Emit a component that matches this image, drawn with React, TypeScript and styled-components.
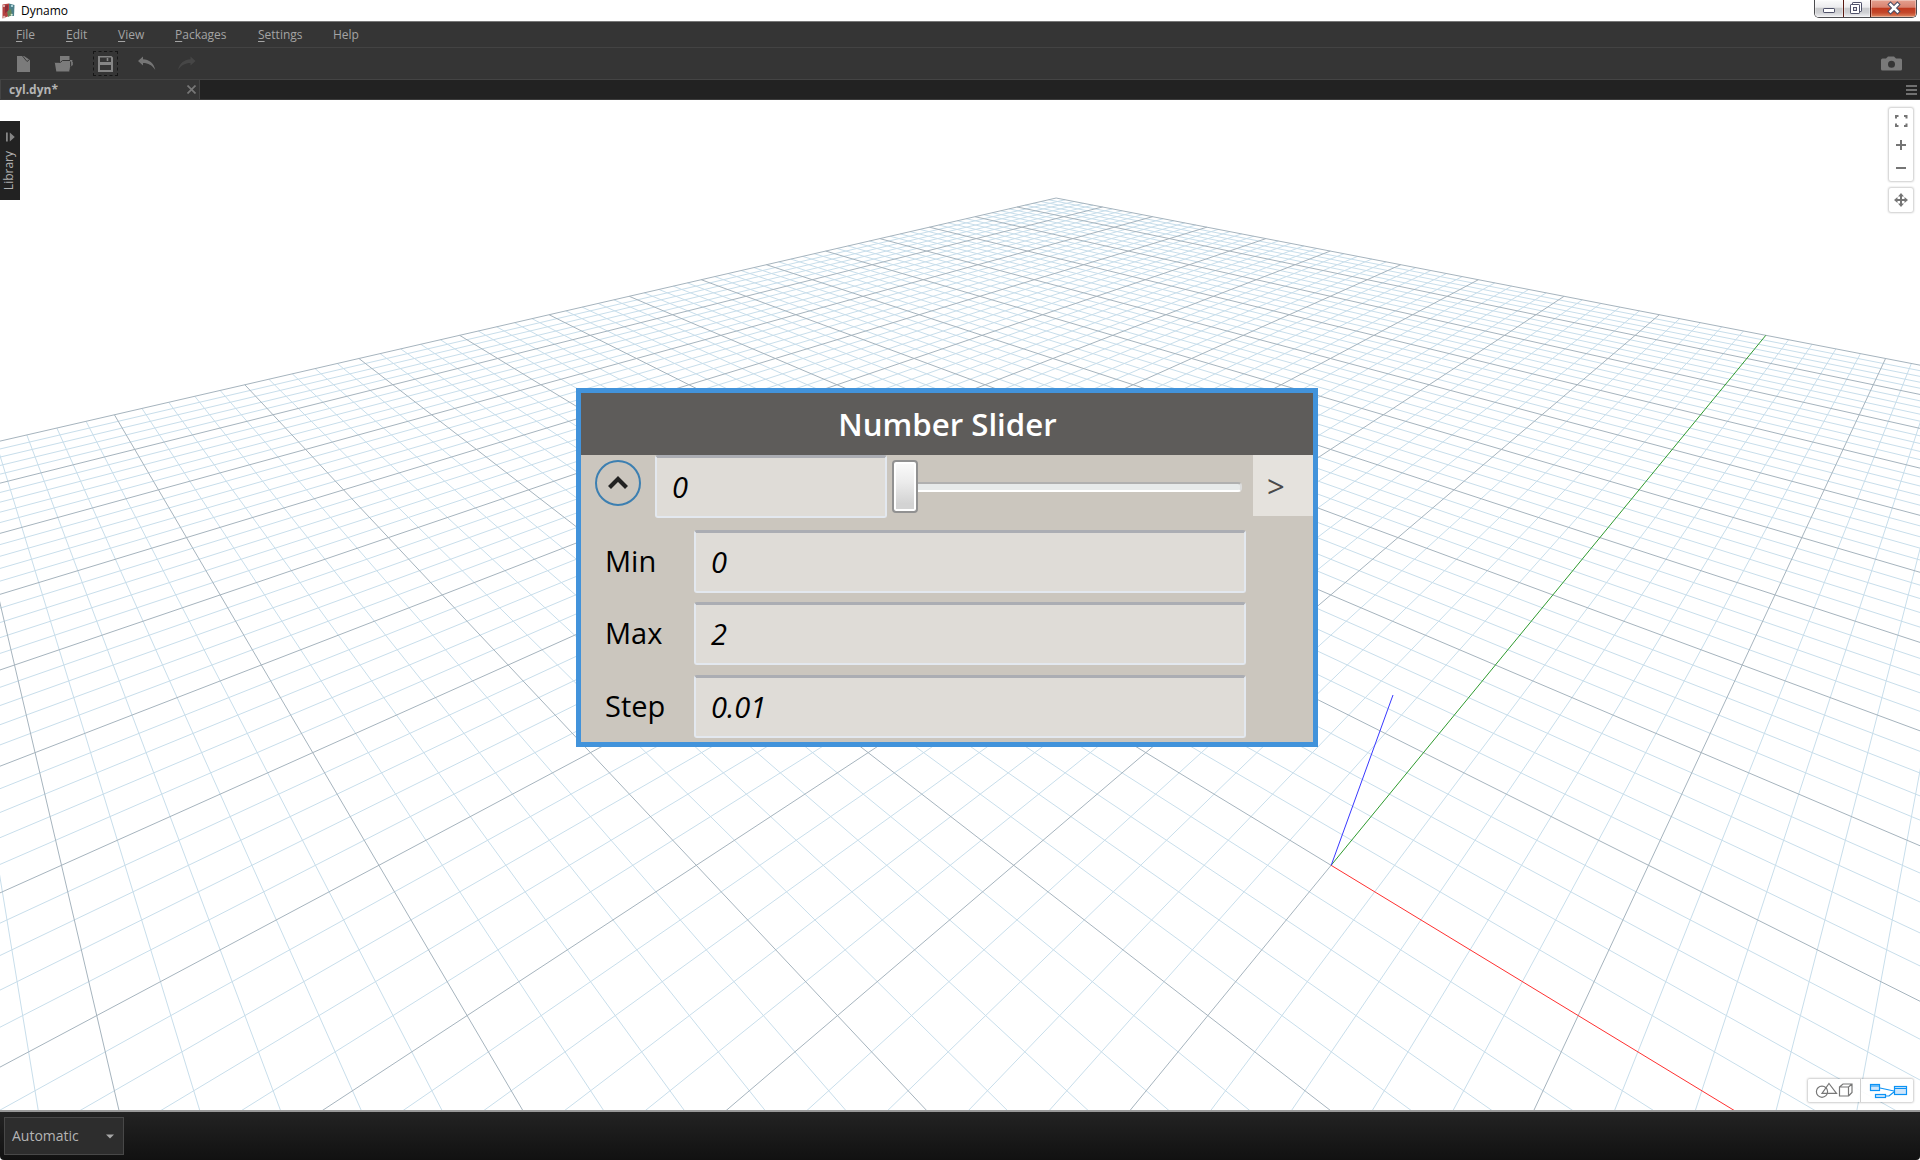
import React from "react";
import styled, { createGlobalStyle } from "styled-components";

const GlobalStyle = createGlobalStyle`
  * { box-sizing: border-box; }
  body { margin: 0; background: #fff; overflow: hidden; }
`;

const Window = styled.div`
  width: 1920px;
  height: 1160px;
  display: flex;
  flex-direction: column;
  font-family: "Open Sans", "Noto Sans", sans-serif;
  background: #fff;
  overflow: hidden;
`;

/* ---------- title bar ---------- */

const TitleBar = styled.header`
  height: 22px;
  flex: none;
  display: flex;
  align-items: flex-start;
  background: #fff;
  border-bottom: 1px solid #777;
`;

const AppIcon = styled.svg`
  margin: 3px 0 0 2px;
  width: 13px;
  height: 16px;
`;

const AppTitle = styled.span`
  margin-left: 6px;
  flex: 1;
  font-size: 12px;
  line-height: 21px;
  color: #000;
`;

const WindowButtons = styled.div`
  display: flex;
  width: 103px;
  height: 18px;
  margin-right: 3px;
  border: 1px solid #4c4c4f;
  border-top: 0;
  border-radius: 0 0 5px 5px;
  overflow: hidden;
`;

const WindowButton = styled.div<{ $width: number; $close?: boolean }>`
  width: ${(p) => p.$width}px;
  height: 17px;
  display: flex;
  justify-content: center;
  background: ${(p) =>
    p.$close
      ? "linear-gradient(#e5a08f 0%, #d98370 42%, #c03a1f 50%, #c4492c 75%, #e08a63 100%)"
      : "linear-gradient(#fbfbfb 0%, #ececee 42%, #cacbcd 50%, #d0d1d4 75%, #f2f2f4 100%)"};
  box-shadow: inset 0 0 0 1px rgba(255, 255, 255, 0.35);
  & + & {
    border-left: 1px solid ${(p) => (p.$close ? "#5b1a12" : "#88888c")};
  }
`;

/* ---------- menu and toolbar ---------- */

const MenuBar = styled.nav`
  height: 26px;
  flex: none;
  display: flex;
  align-items: center;
  padding-left: 16px;
  background: #353535;
  border-bottom: 1px solid #434343;
`;

const MenuItem = styled.span<{ $width: number }>`
  width: ${(p) => p.$width}px;
  font-size: 12px;
  line-height: 25px;
  color: #a4a4a4;
`;

const Accel = styled.span`
  text-decoration: underline;
  text-underline-offset: 2px;
  text-decoration-thickness: 1px;
`;

const ToolBar = styled.div`
  height: 31px;
  flex: none;
  display: flex;
  justify-content: space-between;
  padding: 3px 18px 0 11px;
  background: #353535;
`;

const ToolGroup = styled.div`
  display: flex;
`;

const ToolButton = styled.div<{ $focused?: boolean; $gap?: number }>`
  width: 25px;
  height: 25px;
  margin-right: ${(p) => p.$gap ?? 14}px;
  outline: ${(p) => (p.$focused ? "1px dashed #161616" : "none")};
  outline-offset: -1px;
`;

const Glyph = styled.svg`
  display: block;
`;

/* ---------- tabs ---------- */

const TabStrip = styled.div`
  height: 21px;
  flex: none;
  display: flex;
  justify-content: space-between;
  background: #222;
  border-top: 1px solid #444;
  border-bottom: 1px solid #3c3c3c;
`;

const Tab = styled.div`
  width: 200px;
  display: flex;
  justify-content: space-between;
  align-items: center;
  padding: 0 3px 0 8px;
  background: #353535;
  border-left: 1px solid #444;
  border-right: 1px solid #444;
`;

const TabTitle = styled.span`
  font-size: 12px;
  font-weight: 700;
  line-height: 19px;
  color: #b4b4b4;
`;

const TabMenu = styled.div`
  width: 11px;
  margin: 5px 3px 0 0;
  display: flex;
  flex-direction: column;
  gap: 2px;
`;

const TabMenuLine = styled.div`
  height: 2px;
  background: #707070;
`;

/* ---------- viewport ---------- */

const Viewport = styled.main`
  position: relative;
  height: 1010px;
  flex: none;
  overflow: hidden;
  background: #fff;
`;

const Scene = styled.svg`
  display: block;
  width: 1920px;
  height: 1010px;
`;

const LibraryTab = styled.aside`
  position: absolute;
  left: 0;
  top: 21px;
  width: 20px;
  height: 79px;
  display: flex;
  flex-direction: column;
  align-items: center;
  padding-top: 11px;
  gap: 9px;
  background: #222;
`;

const LibraryLabel = styled.span`
  writing-mode: vertical-rl;
  transform: rotate(180deg);
  margin-right: 2px;
  font-size: 12px;
  line-height: 20px;
  color: #b0b0b0;
`;

const ViewControls = styled.div`
  position: absolute;
  right: 7px;
  top: 8px;
  display: flex;
  flex-direction: column;
  gap: 7px;
`;

const ControlPanel = styled.div<{ $height: number }>`
  width: 24px;
  height: ${(p) => p.$height}px;
  background: #fff;
  border-radius: 2px;
  box-shadow: 0 0 2px 1px rgba(0, 0, 0, 0.2);
`;

const ModeSwitch = styled.div`
  position: absolute;
  right: 7px;
  bottom: 8px;
  display: flex;
  width: 105px;
  height: 23px;
  border-radius: 2px;
  background: rgba(255, 255, 255, 0.9);
  box-shadow: 0 0 2px 1px rgba(0, 0, 0, 0.2);
`;

const Mode = styled.div<{ $width: number }>`
  width: ${(p) => p.$width}px;
  & + & {
    border-left: 1px solid #d0d0d0;
  }
`;

/* ---------- node ---------- */

const Node = styled.section`
  position: absolute;
  left: 576px;
  top: 288px;
  width: 742px;
  height: 359px;
  display: flex;
  flex-direction: column;
  border: 5px solid #4293db;
  background: #cbc6be;
`;

const NodeHeader = styled.h1`
  margin: 0;
  height: 62px;
  flex: none;
  padding-left: 1px;
  background: #5e5c5a;
  color: #fff;
  font-size: 31.2px;
  font-weight: 600;
  line-height: 63px;
  text-align: center;
`;

const SliderRow = styled.div`
  display: flex;
  align-items: flex-start;
  height: 75px;
  flex: none;
  padding-left: 14px;
`;

const Expander = styled.svg`
  margin-top: 5px;
  width: 46px;
  height: 46px;
  flex: none;
`;

const Field = styled.div<{ $width: number }>`
  width: ${(p) => p.$width}px;
  height: 63px;
  flex: none;
  padding-left: 15px;
  border: 2px solid #e3e8ef;
  border-top: 3px solid #abadb3;
  border-radius: 3px;
  background: #dfdcd7;
  color: #000;
  font-size: 29px;
  font-style: italic;
  line-height: 57px;
`;

const MainField = styled(Field)`
  margin-left: 14px;
`;

const Slider = styled.div`
  display: flex;
  align-items: center;
  margin: 5px 0 0 5px;
  width: 350px;
  height: 53px;
  flex: none;
`;

const Thumb = styled.div`
  width: 26px;
  height: 53px;
  flex: none;
  border: 2px solid #919191;
  border-radius: 4px;
  background: linear-gradient(#fbfbfb, #ececec 40%, #d3d3d3 85%);
  box-shadow: inset 0 0 0 2px #fff;
`;

const Track = styled.div`
  flex: 1;
  height: 10px;
  margin-top: 1px;
  border-top: 2px solid #b0b0b0;
  border-right: 2px solid #dcdcdc;
  border-bottom: 2px solid #fff;
  border-radius: 0 4px 4px 0;
  background: #e7eaea;
`;

const Port = styled.div`
  width: 60px;
  height: 61px;
  flex: none;
  margin-left: 11px;
  padding-left: 14px;
  background: #e5e2dd;
  color: #4a4a4a;
  font-size: 31px;
  line-height: 62px;
`;

const ParamList = styled.div`
  display: flex;
  flex-direction: column;
  gap: 9.3px;
`;

const Param = styled.div`
  display: flex;
`;

const ParamLabel = styled.label`
  width: 113px;
  padding-left: 24px;
  font-size: 29px;
  line-height: 62px;
  color: #000;
`;

/* ---------- footer ---------- */

const Footer = styled.footer`
  flex: 1;
  display: flex;
  align-items: flex-start;
  padding: 5px 4px;
  border-top: 2px solid #999;
  border-radius: 0 0 4px 4px;
  background: linear-gradient(#232323, #111);
`;

const RunMode = styled.div`
  width: 120px;
  height: 38px;
  display: flex;
  align-items: center;
  justify-content: space-between;
  padding: 0 9px 0 7px;
  border: 1px solid #484848;
  background: #2d2d2d;
`;

const RunModeLabel = styled.span`
  padding-bottom: 2px;
  color: #b4b4b4;
  font-size: 14px;
`;

/* ---------- ground plane ---------- */

type Pt = [number, number];

const HALF = 50;
const NEAR = 15;

/* Perspective projection of a point on the ground plane into the viewport. */
const project = (u: number, v: number): Pt => {
  const w = 1 + 0.0286 * (v - u);
  return [960 + (31.74 * (u + v) + 371.1) / w, -135.3 + 900.6 / w];
};

const segment = (a: Pt, b: Pt) =>
  `M${a[0].toFixed(2)} ${a[1].toFixed(2)}L${b[0].toFixed(2)} ${b[1].toFixed(2)}`;

const gridPath = (major: boolean) => {
  const parts: string[] = [];
  for (let c = -HALF; c <= HALF; c++) {
    if ((c % 5 === 0) !== major) continue;
    const vMin = Math.max(-HALF, c - NEAR);
    const uMax = Math.min(HALF, c + NEAR);
    if (c === 0) {
      parts.push(segment(project(0, vMin), project(0, 0)));
      parts.push(segment(project(-HALF, 0), project(0, 0)));
      continue;
    }
    if (vMin < HALF) parts.push(segment(project(c, vMin), project(c, HALF)));
    if (uMax > -HALF) parts.push(segment(project(-HALF, c), project(uMax, c)));
  }
  return parts.join("");
};

const minorGrid = gridPath(false);
const majorGrid = gridPath(true);
const xAxis = segment(project(0, 0), project(NEAR, 0));
const yAxis = segment(project(0, 0), project(0, HALF));

const menu = [
  { label: "File", width: 50 },
  { label: "Edit", width: 52 },
  { label: "View", width: 57 },
  { label: "Packages", width: 83 },
  { label: "Settings", width: 75 },
];

const params = [
  { label: "Min", value: "0" },
  { label: "Max", value: "2" },
  { label: "Step", value: "0.01" },
];

export default function App() {
  return (
    <Window>
      <GlobalStyle />
      <TitleBar>
        <AppIcon viewBox="0 0 13 16">
          <path d="M0.5 1.5L7 0.5L7 13L0.5 15.5Z" fill="#b5413f" />
          <path d="M7 0.5L12.5 2L12 13L7 13Z" fill="#4d8089" />
          <path d="M5 8L9 6L10 12L6 14Z" fill="#67885a" />
          <path d="M3 3L6 2L6 8L3 10Z" fill="#8e2f3b" />
          <circle cx="2" cy="3" r="1" fill="#ecd2d0" />
          <circle cx="10" cy="3" r="1.1" fill="#bfe3ea" />
          <circle cx="2.2" cy="14" r="1.2" fill="#d9b8b2" />
          <circle cx="9.7" cy="11.8" r="1.1" fill="#d2e6cf" />
        </AppIcon>
        <AppTitle>Dynamo</AppTitle>
        <WindowButtons>
          <WindowButton $width={28}>
            <Glyph width="14" height="17" viewBox="0 0 14 17">
              <rect x="1.5" y="8.5" width="11" height="4" rx="0.6" fill="#fff" stroke="#50526a" />
            </Glyph>
          </WindowButton>
          <WindowButton $width={27}>
            <Glyph width="14" height="17" viewBox="0 0 14 17">
              <rect x="2.5" y="2.5" width="9" height="9" rx="0.6" fill="#fff" stroke="#50526a" />
              <rect x="0.5" y="4.5" width="9" height="9" rx="0.6" fill="#fff" stroke="#50526a" />
              <rect x="3.5" y="7.5" width="3" height="3" fill="#e2e2e6" stroke="#50526a" />
            </Glyph>
          </WindowButton>
          <WindowButton $width={46} $close>
            <Glyph width="14" height="17" viewBox="0 0 14 17">
              <path d="M3.6 4.6L10.4 11.4M10.4 4.6L3.6 11.4" stroke="#4b4f66" strokeWidth="4.6" strokeLinecap="square" />
              <path d="M3.6 4.6L10.4 11.4M10.4 4.6L3.6 11.4" stroke="#fff" strokeWidth="2.6" strokeLinecap="square" />
            </Glyph>
          </WindowButton>
        </WindowButtons>
      </TitleBar>

      <MenuBar>
        {menu.map((m) => (
          <MenuItem key={m.label} $width={m.width}>
            <Accel>{m.label[0]}</Accel>
            {m.label.slice(1)}
          </MenuItem>
        ))}
        <MenuItem $width={40}>Help</MenuItem>
      </MenuBar>

      <ToolBar>
        <ToolGroup>
          <ToolButton>
            <Glyph width="25" height="25" viewBox="0 0 25 25">
              <path d="M6 5H13L19 9V21H6Z" fill="#7b7b7b" />
              <path d="M11.5 5L16 10.5L18.8 8.3" stroke="#3c3c3c" fill="none" />
            </Glyph>
          </ToolButton>
          <ToolButton $gap={18}>
            <Glyph width="25" height="25" viewBox="0 0 25 25">
              <path d="M10 10V5H19.5V9H22.5L19.5 20.5H6.3L4.7 11H8.7L10 12Z" fill="#7b7b7b" />
              <path d="M4.5 11.3H10.5L12.5 9.5H20" stroke="#353535" fill="none" />
              <path d="M21 10.5L22.8 10.8V14L21.2 15.5Z" fill="#7b7b7b" />
              <path d="M20.6 10.5V15.5L19.8 20.5" stroke="#353535" fill="none" />
            </Glyph>
          </ToolButton>
          <ToolButton $focused $gap={15}>
            <Glyph width="25" height="25" viewBox="0 0 25 25">
              <path fillRule="evenodd" d="M5 5H18.5L20 6.5V21H5ZM7 6.5V11H18V6.5ZM7 14V19H18V14Z" fill="#858585" />
              <path d="M14.500 7V10" stroke="#858585" strokeWidth="1.6" />
            </Glyph>
          </ToolButton>
          <ToolButton>
            <Glyph width="28" height="25" viewBox="0 0 28 25">
              <path d="M5 10L10 5.5V8.3C16 8.5 20.8 12 22.3 19C18.8 14 15.5 12 10 12V14.5Z" fill="#757575" />
            </Glyph>
          </ToolButton>
          <ToolButton>
            <Glyph width="28" height="25" viewBox="0 0 28 25">
              <path d="M23.5 10L18.5 5.5V8.3C12.5 8.5 7.7 12 6 19C9.7 14 13 12 18.500 12V14.5Z" fill="#464646" />
            </Glyph>
          </ToolButton>
        </ToolGroup>
        <Glyph width="21" height="25" viewBox="0 0 21 25">
          <path
            fillRule="evenodd"
            d="M0 9Q0 7.500 1.500 7.500H5L7 5.500H13L15 7.500H19.500Q21 7.500 21 9V18Q21 19.500 19.500 19.500H1.500Q0 19.500 0 18ZM10.500 9.700A3.500 3.500 0 1 0 10.500 16.700A3.500 3.500 0 1 0 10.500 9.700Z"
            fill="#797979"
          />
        </Glyph>
      </ToolBar>

      <TabStrip>
        <Tab>
          <TabTitle>cyl.dyn*</TabTitle>
          <Glyph width="9" height="9" viewBox="0 0 9 9">
            <path d="M0.500 0.500L8.500 8.500M8.500 0.500L0.500 8.500" stroke="#777" strokeWidth="1.700" />
          </Glyph>
        </Tab>
        <TabMenu>
          <TabMenuLine />
          <TabMenuLine />
          <TabMenuLine />
        </TabMenu>
      </TabStrip>

      <Viewport>
        <Scene viewBox="0 0 1920 1010">
          <path d={minorGrid} stroke="#c8deeb" strokeWidth="1" fill="none" />
          <path d={majorGrid} stroke="#a6b4be" strokeWidth="1" fill="none" />
          <path d={xAxis} stroke="#ff3030" strokeWidth="1" />
          <path d={yAxis} stroke="#2e9a2e" strokeWidth="1" />
          <path d="M1331.200 765.300L1393 595" stroke="#3838ff" strokeWidth="1" />
        </Scene>

        <LibraryTab>
          <Glyph width="10" height="10" viewBox="0 0 10 10">
            <path d="M1 0.500H2.800V9.500H1ZM4.800 0.500L9.800 5L4.800 9.500Z" fill="#858585" />
          </Glyph>
          <LibraryLabel>Library</LibraryLabel>
        </LibraryTab>

        <ViewControls>
          <ControlPanel $height={73}>
            <Glyph width="24" height="73" viewBox="0 0 24 73">
              <path d="M7 10.500V8H9.500M15 8H17.500V10.500M17.500 15.500V18H15M9.500 18H7V15.500" fill="none" stroke="#757575" strokeWidth="2" />
              <path d="M7 37H17M12 32V42M7 60H17" stroke="#757575" strokeWidth="2" />
            </Glyph>
          </ControlPanel>
          <ControlPanel $height={24}>
            <Glyph width="24" height="24" viewBox="0 0 24 24">
              <path d="M7 12H17M12 7V17" stroke="#757575" strokeWidth="2" />
              <path d="M12 5L15 8.500H9ZM12 19L15 15.500H9ZM5 12L8.500 9V15ZM19 12L15.500 9V15Z" fill="#757575" />
            </Glyph>
          </ControlPanel>
        </ViewControls>

        <Node>
          <NodeHeader>Number Slider</NodeHeader>
          <SliderRow>
            <Expander viewBox="0 0 46 46">
              <circle cx="23" cy="23" r="22" fill="none" stroke="#3c7fb1" strokeWidth="2" />
              <path d="M14.500 27.500L23 19L31.500 27.500" fill="none" stroke="#222" strokeWidth="4.200" />
            </Expander>
            <MainField $width={232}>0</MainField>
            <Slider>
              <Thumb />
              <Track />
            </Slider>
            <Port>&gt;</Port>
          </SliderRow>
          <ParamList>
            {params.map((p) => (
              <Param key={p.label}>
                <ParamLabel>{p.label}</ParamLabel>
                <Field $width={552}>{p.value}</Field>
              </Param>
            ))}
          </ParamList>
        </Node>

        <ModeSwitch>
          <Mode $width={52}>
            <Glyph width="52" height="24" viewBox="0 0 52 24">
              <g fill="none" stroke="#777" strokeWidth="1.200">
                <circle cx="14" cy="12.700" r="5.600" />
                <path d="M21 4.500L28.500 14.300H14Z" />
                <path d="M31.500 8H40.500V17H31.500ZM31.500 8L35 5H44V13.500L40.500 17M40.500 8L44 5" />
              </g>
            </Glyph>
          </Mode>
          <Mode $width={53}>
            <Glyph width="52" height="24" viewBox="0 0 52 24">
              <g fill="#cfe6fb" stroke="#0c93f5" strokeWidth="1.200">
                <path d="M19 9L33 12M24 17H28L33 13" fill="none" />
                <rect x="9.500" y="5.500" width="9" height="6" />
                <rect x="14.500" y="15.500" width="10" height="3" />
                <rect x="33.500" y="7.500" width="12" height="8" />
                <path d="M9 7H19M33 9.500H46" />
              </g>
            </Glyph>
          </Mode>
        </ModeSwitch>
      </Viewport>

      <Footer>
        <RunMode>
          <RunModeLabel>Automatic</RunModeLabel>
          <Glyph width="8" height="5" viewBox="0 0 8 5">
            <path d="M0 0.500H8L4 4.500Z" fill="#a8a8a8" />
          </Glyph>
        </RunMode>
      </Footer>
    </Window>
  );
}
